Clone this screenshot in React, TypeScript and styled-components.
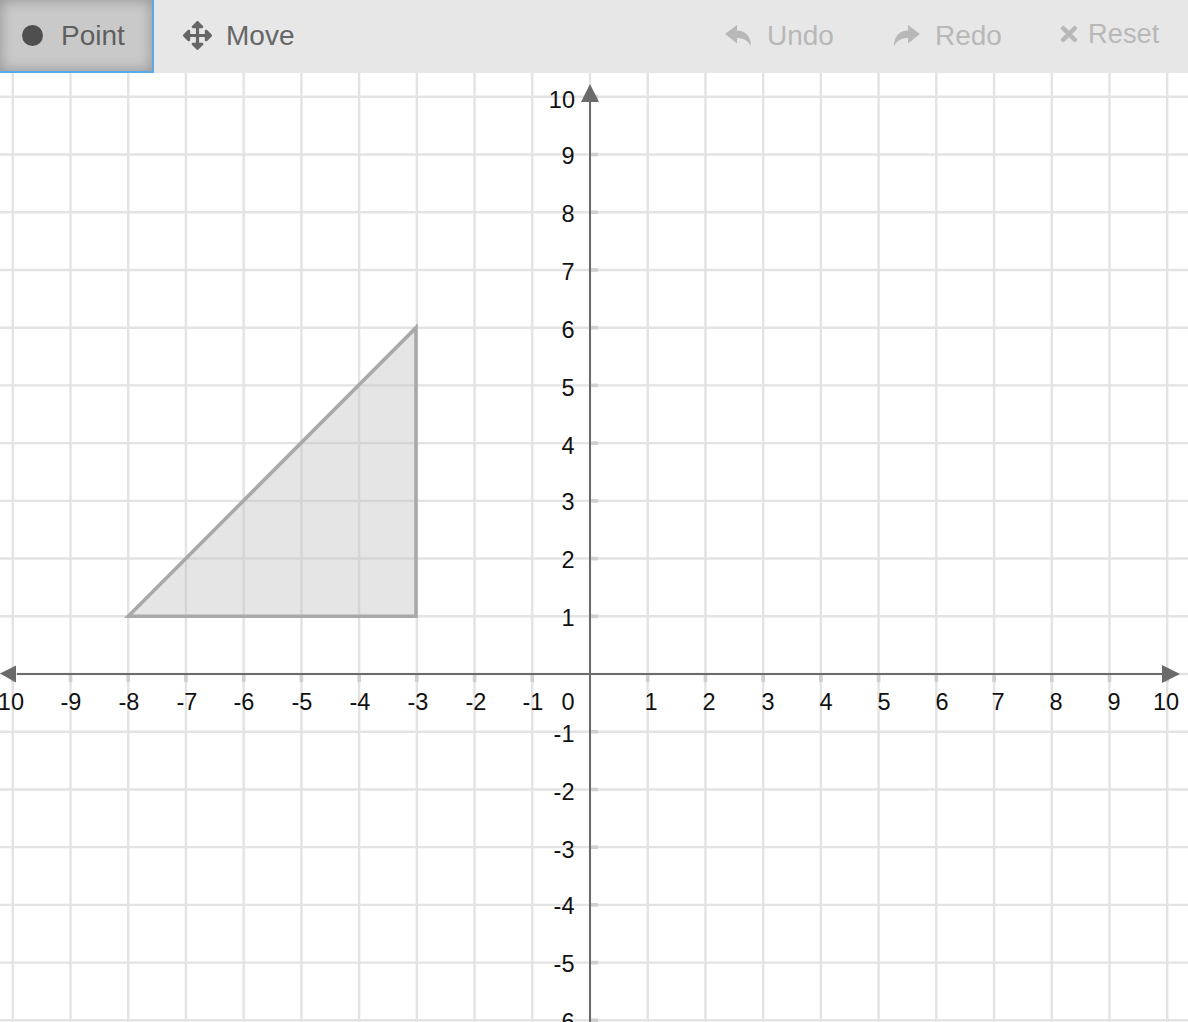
import React from "react";
import styled, { createGlobalStyle } from "styled-components";
import { FaArrowsAlt, FaTimes } from "react-icons/fa";

const Global = createGlobalStyle`
  html, body { margin: 0; padding: 0; background: #fff; overflow: hidden; }
  body { font-family: "Liberation Sans", Arial, sans-serif; }
`;

const Page = styled.div`
  width: 1188px;
  height: 1022px;
  display: flex;
  flex-direction: column;
  overflow: hidden;
`;

const Toolbar = styled.div`
  height: 73px;
  flex: none;
  display: flex;
  align-items: stretch;
  background: #e7e7e7;
`;

const Tool = styled.div<{ $width: number; $gap: number; $pad?: number; $disabled?: boolean }>`
  width: ${(p) => p.$width}px;
  box-sizing: border-box;
  flex: none;
  display: flex;
  align-items: center;
  gap: ${(p) => p.$gap}px;
  font-size: 28px;
  color: ${(p) => (p.$disabled ? "#b8b8b8" : "#666")};
  padding-left: ${(p) => p.$pad ?? 0}px;
  padding-bottom: 2px;
`;

const ActiveTool = styled(Tool)`
  padding-bottom: 0;
  background: #c9c9c9;
  border-right: 2px solid #5aa9e6;
  border-bottom: 2px solid #5aa9e6;
  box-shadow: inset 0 0 14px rgba(0, 0, 0, 0.28);
  color: #5f5f5f;
`;

const ResetTool = styled(Tool)`
  padding-bottom: 5px;
  font-size: 27.3px;
`;

const Spacer = styled.div`
  flex: 1;
`;

const Dot = styled.span`
  width: 21px;
  height: 21px;
  border-radius: 50%;
  background: #4f4f4f;
  flex: none;
`;

const HistoryIcon = styled.svg<{ $flip?: boolean }>`
  width: 26px;
  height: 21px;
  flex: none;
  fill: currentColor;
  ${(p) => (p.$flip ? "transform: scaleX(-1);" : "")}
`;

const Plot = styled.svg`
  display: block;
  flex: none;
`;

const TickLabel = styled.text`
  font-family: "Liberation Sans", Arial, sans-serif;
  font-size: 23.5px;
  fill: #111;
`;

const U = 57.72;
const OX = 590;
const OY = 601; // origin y inside the plot (674 on the page)
const range = (a: number, b: number) => Array.from({ length: b - a + 1 }, (_, i) => a + i);
const px = (v: number) => OX + v * U;
const py = (v: number) => OY - v * U;

const xLabels: [string, number][] = [
  ["-9", 71], ["-8", 129], ["-7", 187], ["-6", 244], ["-5", 302], ["-4", 360], ["-3", 418], ["-2", 476], ["-1", 533],
  ["0", 568], ["1", 651], ["2", 709], ["3", 768], ["4", 826], ["5", 884], ["6", 942], ["7", 998], ["8", 1056], ["9", 1114], ["10", 1166],
];
const yLabels: [number, number][] = [
  [10, 26], [9, 82], [8, 140], [7, 198], [6, 256], [5, 314], [4, 372], [3, 428], [2, 486], [1, 544],
  [-1, 660], [-2, 718], [-3, 776], [-4, 832], [-5, 890], [-6, 948],
];

function Chart() {
  const xs = range(-10, 10);
  const ys = range(-6, 11);
  return (
    <Plot width={1188} height={949} viewBox="0 0 1188 949">
      {xs.map((v) => (
        <line key={v} x1={px(v)} x2={px(v)} y1={0} y2={949} stroke="#e3e3e3" strokeWidth={2.4} />
      ))}
      {ys.map((v) => (
        <line key={v} x1={0} x2={1188} y1={py(v)} y2={py(v)} stroke="#e3e3e3" strokeWidth={2.4} />
      ))}
      <polygon
        points={`${px(-8)},${py(1)} 416,${py(6)} 416,${py(1)}`}
        fill="#c4c4c4"
        fillOpacity={0.44}
        stroke="#a9a9a9"
        strokeWidth={3.6}
      />
      {xs.filter((v) => v !== 0).map((v) => (
        <line key={v} x1={px(v)} x2={px(v)} y1={OY} y2={OY + 8} stroke="#cfcfcf" strokeWidth={3.6} />
      ))}
      {range(-6, 10).filter((v) => v !== 0).map((v) => (
        <line key={v} x1={OX} x2={OX + 8} y1={py(v)} y2={py(v)} stroke="#cfcfcf" strokeWidth={3.6} />
      ))}
      <line x1={17} x2={1164} y1={OY} y2={OY} stroke="#6b6b6b" strokeWidth={2} />
      <line x1={OX} x2={OX} y1={26} y2={949} stroke="#6b6b6b" strokeWidth={2} />
      <polygon points={`0,${OY - 0.5} 16,${OY - 8.5} 16,${OY + 8.5}`} fill="#6b6b6b" />
      <polygon points={`1180,${OY} 1162,${OY - 9} 1162,${OY + 9}`} fill="#6b6b6b" />
      <polygon points={`${OX},11 ${OX - 9},29 ${OX + 9},29`} fill="#6b6b6b" />
      <TickLabel x={24} y={637} textAnchor="end">-10</TickLabel>
      {xLabels.map(([t, x]) => (
        <TickLabel key={t} x={x} y={637} textAnchor="middle">
          {t}
        </TickLabel>
      ))}
      {yLabels.map(([v, c]) => (
        <TickLabel key={v} x={v === 10 ? 575 : 574.5} y={c + 8.5} textAnchor="end">
          {v}
        </TickLabel>
      ))}
    </Plot>
  );
}

const arrow = "M0 9 L12 0 V5.5 C20 5.5 26 11 26 21 C23 15.5 18 13 12 13 V18.5 Z";

export default function App() {
  return (
    <Page>
      <Global />
      <Toolbar>
        <ActiveTool $width={154} $gap={18} $pad={22}>
          <Dot />
          Point
        </ActiveTool>
        <Tool $width={200} $gap={14} $pad={29}>
          <FaArrowsAlt size={29} />
          Move
        </Tool>
        <Spacer />
        <Tool $disabled $width={169} $gap={16}>
          <HistoryIcon viewBox="0 0 26 21">
            <path d={arrow} />
          </HistoryIcon>
          Undo
        </Tool>
        <Tool $disabled $width={163} $gap={15}>
          <HistoryIcon $flip viewBox="0 0 26 21">
            <path d={arrow} />
          </HistoryIcon>
          Redo
        </Tool>
        <ResetTool $disabled $width={131} $gap={7}>
          <FaTimes size={24} />
          Reset
        </ResetTool>
      </Toolbar>
      <Chart />
    </Page>
  );
}
